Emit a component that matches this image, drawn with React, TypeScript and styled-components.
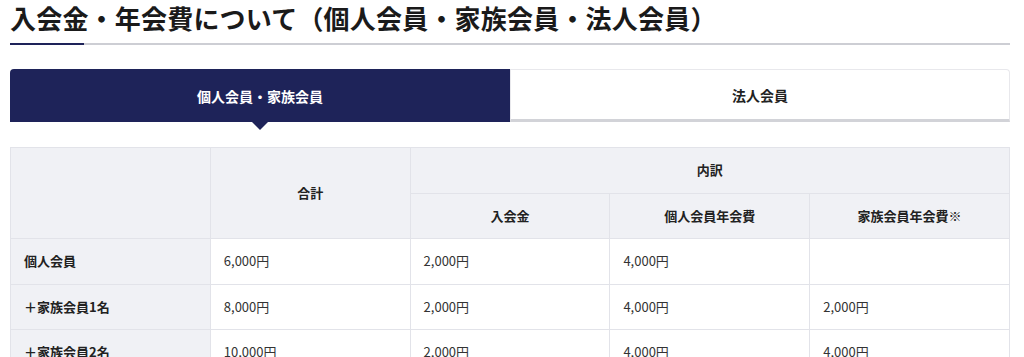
import React from 'react'
import styled, { createGlobalStyle } from 'styled-components'

const GlobalStyle = createGlobalStyle`
  body {
    margin: 0;
    background: #fff;
    font-family: "Noto Sans CJK JP", "Noto Sans", sans-serif;
    color: #222;
  }
`

const Page = styled.div`
  padding: 0 14px 0 10px;
`

const Title = styled.h2`
  position: relative;
  margin: 0;
  padding-bottom: 7px;
  font-size: 26px;
  line-height: 36px;
  font-weight: 700;
  color: #1a1a1a;
  letter-spacing: 0.2px;
  border-bottom: 2px solid #cdced4;

  &::after {
    content: '';
    position: absolute;
    left: 0;
    bottom: -2px;
    width: 74px;
    height: 2px;
    background: #1e2359;
  }
`

const TabList = styled.div`
  display: grid;
  grid-template-columns: 1fr 1fr;
  margin-top: 24px;
`

const Tab = styled.div<{ $active?: boolean }>`
  position: relative;
  display: flex;
  align-items: center;
  justify-content: center;
  height: 53px;
  box-sizing: border-box;
  font-size: 14px;
  font-weight: 700;
  color: ${(p) => (p.$active ? '#fff' : '#222')};
  background: ${(p) => (p.$active ? '#1e2359' : '#fff')};
  border: ${(p) => (p.$active ? 'none' : '1px solid #e8e8ec')};
  border-bottom: ${(p) => (p.$active ? 'none' : '3px solid #d2d3d8')};
  border-radius: ${(p) => (p.$active ? '4px 0 0 0' : '0 4px 0 0')};

  &::after {
    content: '';
    display: ${(p) => (p.$active ? 'block' : 'none')};
    position: absolute;
    left: 50%;
    bottom: -8px;
    margin-left: -8px;
    border-top: 8px solid #1e2359;
    border-left: 8px solid transparent;
    border-right: 8px solid transparent;
  }
`

const Table = styled.table`
  width: 100%;
  margin-top: 25px;
  border-collapse: collapse;
  table-layout: fixed;
  font-size: 13px;
`

const Th = styled.th<{ $row?: boolean }>`
  padding: 13px 13px;
  line-height: 18.5px;
  background: #f0f1f5;
  border: 1px solid #e2e3e9;
  font-weight: 700;
  color: #222;
  text-align: ${(p) => (p.$row ? 'left' : 'center')};
`

const Td = styled.td`
  padding: 13px 13px;
  line-height: 18.5px;
  background: #fff;
  border: 1px solid #e2e3e9;
  color: #333;
  text-align: left;
`

const rows = [
  { label: '個人会員', values: ['6,000円', '2,000円', '4,000円', ''] },
  { label: '＋家族会員1名', values: ['8,000円', '2,000円', '4,000円', '2,000円'] },
  { label: '＋家族会員2名', values: ['10,000円', '2,000円', '4,000円', '4,000円'] },
]

export default function App() {
  return (
    <>
      <GlobalStyle />
      <Page>
        <Title>入会金・年会費について（個人会員・家族会員・法人会員）</Title>
        <TabList>
          <Tab $active>個人会員・家族会員</Tab>
          <Tab>法人会員</Tab>
        </TabList>
        <Table>
          <thead>
            <tr>
              <Th rowSpan={2}></Th>
              <Th rowSpan={2}>合計</Th>
              <Th colSpan={3}>内訳</Th>
            </tr>
            <tr>
              <Th>入会金</Th>
              <Th>個人会員年会費</Th>
              <Th>家族会員年会費※</Th>
            </tr>
          </thead>
          <tbody>
            {rows.map((r) => (
              <tr key={r.label}>
                <Th $row scope="row">{r.label}</Th>
                {r.values.map((v, i) => (
                  <Td key={i}>{v}</Td>
                ))}
              </tr>
            ))}
          </tbody>
        </Table>
      </Page>
    </>
  )
}
